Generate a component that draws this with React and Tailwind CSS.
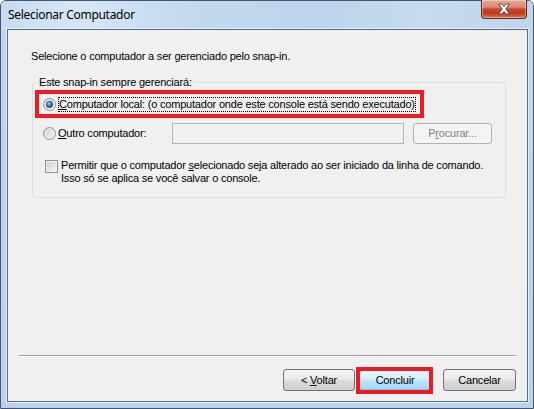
import React from "react";

const F = { fontFamily: '"Liberation Sans", Arial, sans-serif' };

function Radio({ checked }) {
  return (
    <svg width="13" height="13" viewBox="0 0 13 13" className="shrink-0">
      <defs>
        <linearGradient id={checked ? "rg1" : "rg0"} x1="0" y1="0" x2="1" y2="1">
          <stop offset="0" stopColor="#c9c9c9" />
          <stop offset="1" stopColor="#f7f7f7" />
        </linearGradient>
        <radialGradient id="dot" cx="0.4" cy="0.35" r="0.7">
          <stop offset="0" stopColor="#8fd3ff" />
          <stop offset="0.5" stopColor="#2b83c9" />
          <stop offset="1" stopColor="#163f73" />
        </radialGradient>
      </defs>
      <circle cx="6.5" cy="6.5" r="6" fill={`url(#${checked ? "rg1" : "rg0"})`} stroke="#8e8f8f" strokeWidth="1" />
      <circle cx="6.5" cy="6.5" r="4.5" fill="none" stroke="#f4f4f4" strokeWidth="1" />
      {checked && <circle cx="6.5" cy="6.5" r="3.3" fill="url(#dot)" stroke="#1e4f7c" strokeWidth="0.6" />}
    </svg>
  );
}

function Btn({ children, className = "", primary = false }) {
  return (
    <div
      className={
        "h-[22px] rounded-[3px] border flex items-center justify-center text-[11px] text-black tracking-[-0.2px] " +
        (primary
          ? "border-[#3c7fb1] bg-[linear-gradient(#eaf6fd_0%,#d9f0fc_45%,#bee6fd_50%,#a7d9f5_95%,#3cc0f5_100%)] "
          : "border-[#707070] bg-[linear-gradient(#f2f2f2_0%,#ebebeb_45%,#dddddd_50%,#cfcfcf_100%)] ") +
        className
      }
      style={F}
    >
      <span className="whitespace-pre">{children}</span>
    </div>
  );
}

export default function App() {
  return (
    <div className="w-[534px] h-[409px] bg-white">
      <div className="w-full h-full border border-[#45566a] rounded-t-[6px] flex flex-col bg-[linear-gradient(180deg,#cfe1f4_0%,#bfd6ee_8%,#b9d1ea_100%)]">
        {/* title bar */}
        <div className="h-[28px] flex justify-between items-start shrink-0 bg-[linear-gradient(90deg,#c7dcf2_0%,#d6e6f6_15%,#c3d9f0_35%,#bdd4ec_60%,#c6dbf1_80%,#bdd4ec_100%)] rounded-t-[5px]">
          <div
            className="ml-[7px] mt-[6px] text-[12px] leading-[16px] text-black tracking-[-0.3px]"
            style={{ fontFamily: '"Noto Sans", "Open Sans", sans-serif' }}
          >
            Selecionar Computador
          </div>
          <div className="mr-[6px] w-[46px] h-[19px] -mt-px rounded-b-[4px] border border-[#5b2a22] border-t-0 bg-[linear-gradient(180deg,#e8a898_0%,#dc8a74_40%,#c6462c_50%,#c2391e_75%,#d8804f_100%)] flex items-center justify-center shadow-[inset_0_0_0_1px_rgba(255,255,255,0.35)]">
            <svg width="14" height="12" viewBox="0 0 14 12">
              <path
                d="M1.5 1 L4.8 1 L7 3.6 L9.2 1 L12.5 1 L8.8 6 L12.5 11 L9.2 11 L7 8.4 L4.8 11 L1.5 11 L5.2 6 Z"
                fill="#ffffff"
                stroke="#4a4a4a"
                strokeWidth="1"
                strokeLinejoin="round"
              />
            </svg>
          </div>
        </div>

        {/* client */}
        <div className="flex-1 ml-[6px] mr-[5px] mb-[6px] border border-[#5d6c7c] bg-[#f0f0f0] flex flex-col text-[11px] leading-[13px] text-black tracking-[-0.2px] shadow-[0_0_0_1px_#e3eefa]" style={F}>
          <div className="ml-[23px] mt-[20px]">Selecione o computador a ser gerenciado pelo snap-in.</div>

          <fieldset className="ml-[24px] mt-[13px] w-[474px] border border-[#d5dfe5] rounded-[3px] pb-[12px]">
            <legend className="ml-[4px] px-[2px]">Este snap-in sempre gerenciará:</legend>

            <div className="ml-[2px] mt-[1px] w-[389px] h-[28px] border-[4px] border-[#ed1c24] flex items-center pl-[4px]">
              <Radio checked />
              <span className="ml-[2px] border border-dotted border-black leading-[13px] whitespace-nowrap">
                <span className="underline">C</span>omputador local: (o computador onde este console está sendo executado)
              </span>
            </div>

            <div className="mt-[5px] h-[21px] flex items-center">
              <div className="ml-[10px] w-[129px] flex items-center">
                <Radio />
                <span className="ml-[2px]">
                  <span className="underline">O</span>utro computador:
                </span>
              </div>
              <div className="w-[232px] h-[21px] border border-[#b5b5b5] bg-[#f0f0f0]" />
              <div className="ml-[9px] w-[79px] h-[21px] rounded-[3px] border border-[#adb2b5] bg-[#f4f4f4] flex items-center justify-center text-[#838383]">
                <span>
                  P<span className="underline">r</span>ocurar...
                </span>
              </div>
            </div>

            <div className="mt-[15px] flex items-start">
              <div className="ml-[12px] mt-px w-[13px] h-[13px] border border-[#8e8f8f] bg-[#f4f4f4] p-px shrink-0">
                <div className="w-full h-full bg-[linear-gradient(135deg,#cbcfd5_0%,#e8e9ea_70%,#f6f6f6_100%)]" />
              </div>
              <div className="ml-[3px]">
                <div className="whitespace-nowrap">
                  Permitir que o computador <span className="underline">s</span>elecionado seja alterado ao ser iniciado da linha de comando.
                </div>
                <div>Isso só se aplica se você salvar o console.</div>
              </div>
            </div>
          </fieldset>

          <div className="flex-1" />

          <div className="ml-[11px] w-[497px] h-px bg-[#a0a0a0] shadow-[0_1px_0_#ffffff]" />

          <div className="mt-[13px] mb-[10px] pr-[11px] flex justify-end items-center">
            <Btn className="w-[72px]">
              {"< "}
              <span className="underline">V</span>oltar
            </Btn>
            <div className="relative ml-[4px]">
              <Btn primary className="w-[72px]">
                Concluir
              </Btn>
              <div className="absolute -left-[3px] -right-[2px] -top-[2px] -bottom-[3px] border-[4px] border-[#ed1c24]" />
            </div>
            <Btn className="w-[73px] ml-[12px]">Cancelar</Btn>
          </div>
        </div>
      </div>
    </div>
  );
}
